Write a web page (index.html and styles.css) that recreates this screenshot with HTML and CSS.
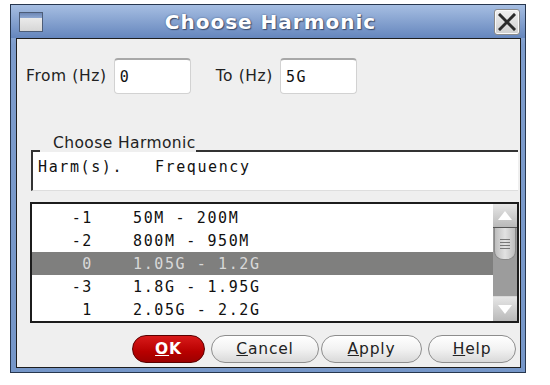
FILE: index.html
```html
<!DOCTYPE html>
<html lang="en">
<head>
    <meta charset="UTF-8">
    <title>Choose Harmonic</title>
    <link rel="stylesheet" href="styles.css">
</head>
<body>
    <div class="window">
        <!-- Title Bar -->
        <div class="titlebar">
            <span class="win-icon"><span class="win-icon-bar"></span></span>
            <span class="title">Choose Harmonic</span>
            <span class="close">
                <svg width="18" height="18" viewBox="0 0 18 18">
                    <path d="M2 2 L16 16 M16 2 L2 16" stroke="#2b2b2b" stroke-width="3" stroke-linecap="square"/>
                </svg>
            </span>
        </div>

        <div class="content">
            <!-- Range Fields -->
            <div class="range-row">
                <label class="field-label" for="from">From (Hz)</label>
                <input class="field" type="text" id="from" value="0">
                <label class="field-label to-label" for="to">To (Hz)</label>
                <input class="field" type="text" id="to" value="5G">
            </div>

            <!-- Harmonic Group -->
            <div class="group">
                <div class="group-title">
                    <span class="corner"></span>
                    <span class="legend">Choose Harmonic</span>
                    <span class="rule"></span>
                </div>
                <div class="group-head">Harm(s).   Frequency</div>
            </div>

            <div class="list">
                <div class="rows">
                    <div class="row"><span class="harm">-1</span><span class="freq">50M - 200M</span></div>
                    <div class="row"><span class="harm">-2</span><span class="freq">800M - 950M</span></div>
                    <div class="row selected"><span class="harm">0</span><span class="freq">1.05G - 1.2G</span></div>
                    <div class="row"><span class="harm">-3</span><span class="freq">1.8G - 1.95G</span></div>
                    <div class="row"><span class="harm">1</span><span class="freq">2.05G - 2.2G</span></div>
                </div>
                <div class="scrollbar">
                    <div class="sb-btn"><span class="arrow-up"></span></div>
                    <div class="sb-thumb">
                        <span class="grip"></span><span class="grip"></span><span class="grip"></span><span class="grip"></span>
                    </div>
                    <div class="sb-track"></div>
                    <div class="sb-btn"><span class="arrow-down"></span></div>
                </div>
            </div>

            <!-- Dialog Buttons -->
            <div class="buttons">
                <button class="btn btn-ok"><u>O</u>K</button>
                <button class="btn btn-cancel"><u>C</u>ancel</button>
                <button class="btn btn-apply"><u>A</u>pply</button>
                <button class="btn btn-help"><u>H</u>elp</button>
            </div>
        </div>
    </div>
</body>
</html>
```

FILE: styles.css
```css
/* General Styles */
* {
    margin: 0;
    padding: 0;
    box-sizing: border-box;
}
body {
    background: #ffffff;
    font-family: "DejaVu Sans", sans-serif;
    color: #222;
}
.window {
    margin: 4px 0 0 10px;
    width: 516px;
    border: 1px solid #27374f;
    background: linear-gradient(to bottom, #a9c0e2, #7d9ccc 40px, #7596c8);
    padding: 0 4px 4px 5px;
}

/* Title Bar */
.titlebar {
    height: 33px;
    display: grid;
    grid-template-columns: 24px 1fr 26px;
    align-items: center;
    background: linear-gradient(to bottom, #a6bee2, #6586bd);
    margin: 0 -4px 0 -5px;
    padding: 0 5px 0 8px;
}
.win-icon {
    width: 24px;
    height: 20px;
    border: 1px solid #4d5d78;
    background: linear-gradient(to bottom, #f2f2f2, #d6d6d6);
    display: flex;
    flex-direction: column;
    margin-top: 1px;
}
.win-icon-bar {
    height: 5px;
    background: linear-gradient(to bottom, #6d87b5, #8fa8d2);
}
.title {
    text-align: center;
    color: #ffffff;
    font-size: 20px;
    font-weight: bold;
    letter-spacing: 1px;
    padding-left: 4px;
    text-shadow: 1px 1px 1px #3a4c6c, 0 0 2px #4a5f85;
}
.close {
    width: 26px;
    height: 26px;
    border: 1px solid #8a8a8a;
    border-radius: 3px;
    background: linear-gradient(to bottom, #f0f0f0, #cfcfcf);
    display: flex;
    align-items: center;
    justify-content: center;
    box-shadow: inset 0 0 0 1px #fafafa;
}

/* Content */
.content {
    background: #efefef;
    border: 1px solid #1e1e1e;
    padding: 19px 0 4px 0;
}
.range-row {
    display: flex;
    align-items: center;
    padding-left: 9px;
}
.field-label {
    font-size: 15.5px;
    letter-spacing: 0.6px;
    color: #222;
}
.to-label {
    margin-left: 25px;
}
.field {
    width: 77px;
    height: 36px;
    margin-left: 7px;
    border: 1px solid #d2d2d2;
    border-top: 2px solid #a8a8a8;
    border-radius: 4px;
    background: #ffffff;
    font-family: "DejaVu Sans Mono", monospace;
    font-size: 15px;
    letter-spacing: 1.6px;
    padding-left: 5px;
    color: #111;
}

/* Group */
.group {
    margin: 40px 2px 0 14px;
}
.group-title {
    display: flex;
    align-items: flex-end;
}
.corner {
    width: 9px;
    border-bottom: 2px solid #333;
}
.legend {
    font-size: 15.5px;
    letter-spacing: 0.4px;
    line-height: 18px;
    padding-left: 13px;
    color: #222;
}
.rule {
    flex: 1;
    border-bottom: 2px solid #333;
}
.group-head {
    height: 39px;
    background: #ffffff;
    border-left: 2px solid #333;
    border-bottom: 1px solid #dedede;
    padding: 6px 0 0 5px;
    font-family: "DejaVu Sans Mono", monospace;
    font-size: 15px;
    letter-spacing: 1.6px;
    white-space: pre;
    color: #111;
}

/* List */
.list {
    margin: 11px 1px 0 13px;
    border: 2px solid #1c1c1c;
    background: #ffffff;
    display: flex;
    height: 121px;
}
.rows {
    flex: 1;
    padding-top: 2px;
}
.row {
    height: 23px;
    display: flex;
    align-items: center;
    font-family: "DejaVu Sans Mono", monospace;
    font-size: 15px;
    letter-spacing: 1.6px;
    white-space: pre;
    color: #111;
}
.row.selected {
    background: #7f7f7e;
    color: #d8d8d8;
}
.harm {
    width: 61px;
    text-align: right;
}
.freq {
    margin-left: 40px;
}

/* Scrollbar */
.scrollbar {
    width: 24px;
    display: flex;
    flex-direction: column;
    background: #9c9c9c;
}
.sb-btn {
    height: 24px;
    background: linear-gradient(to bottom, #e6e6e6, #b9b9b9);
    display: flex;
    align-items: center;
    justify-content: center;
}
.sb-btn:first-child {
    border-bottom: 1px solid #555;
}
.sb-btn:last-child {
    height: 25px;
    border-top: 1px solid #d8d8d8;
}
.arrow-up {
    border-left: 7px solid transparent;
    border-right: 7px solid transparent;
    border-bottom: 9px solid #ffffff;
}
.arrow-down {
    border-left: 7px solid transparent;
    border-right: 7px solid transparent;
    border-top: 9px solid #ffffff;
}
.sb-thumb {
    height: 32px;
    margin: 0 1px;
    border-radius: 0 0 9px 9px;
    background: linear-gradient(to right, #bdbdbd, #e2e2e2 50%, #bdbdbd);
    border: 1px solid #8a8a8a;
    border-top: none;
    display: flex;
    flex-direction: column;
    align-items: center;
    justify-content: center;
    gap: 2px;
}
.grip {
    width: 10px;
    height: 1px;
    background: #777;
}
.sb-track {
    flex: 1;
}

/* Buttons */
.buttons {
    display: flex;
    justify-content: flex-end;
    margin: 12px 4px 0 0;
}
.btn {
    height: 28px;
    border-radius: 14px;
    font-family: "DejaVu Sans", sans-serif;
    font-size: 15.5px;
    letter-spacing: 0.8px;
    border: 1px solid #8d8d8d;
    background: linear-gradient(to bottom, #ffffff, #f2f2f2 50%, #d9d9d9);
    color: #222;
}
.btn-ok {
    width: 73px;
    background: linear-gradient(to bottom, #d81a1a, #b80000 60%, #9c0000);
    border-color: #5a0000;
    color: #ffffff;
    font-weight: bold;
}
.btn-cancel {
    width: 108px;
    margin-left: 6px;
}
.btn-apply {
    width: 101px;
    margin-left: 2px;
}
.btn-help {
    width: 88px;
    margin-left: 6px;
}
```
